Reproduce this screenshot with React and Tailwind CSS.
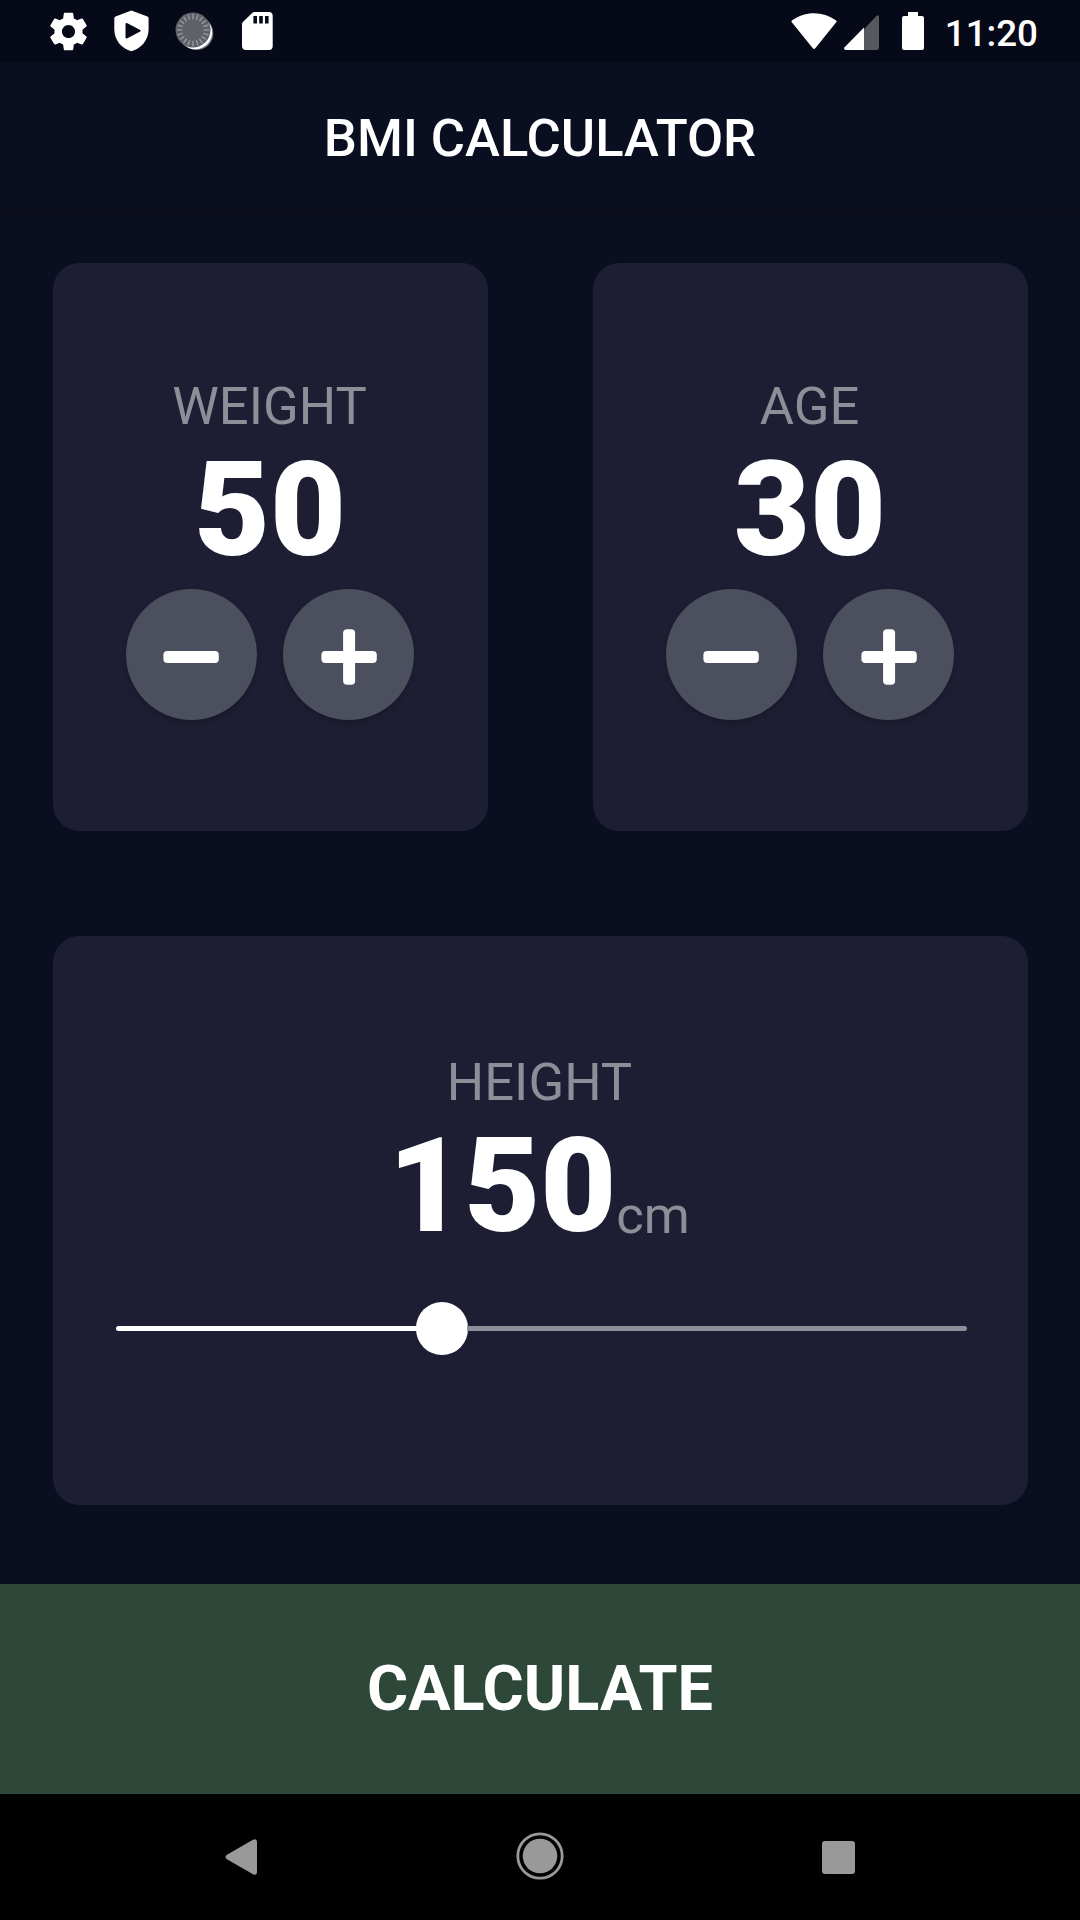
const GEAR =
  "M19.43 12.98c.04-.32.07-.64.07-.98s-.03-.66-.07-.98l2.11-1.65c.19-.15.24-.42.12-.64l-2-3.46c-.12-.22-.39-.3-.61-.22l-2.49 1c-.52-.4-1.08-.73-1.69-.98l-.38-2.65C14.46 2.18 14.25 2 14 2h-4c-.25 0-.46.18-.49.42l-.38 2.65c-.61.25-1.17.59-1.69.98l-2.49-1c-.23-.09-.49 0-.61.22l-2 3.46c-.13.22-.07.49.12.64l2.11 1.65c-.04.32-.07.65-.07.98s.03.66.07.98l-2.11 1.65c-.19.15-.24.42-.12.64l2 3.46c.12.22.39.3.61.22l2.49-1c.52.4 1.08.73 1.69.98l.38 2.65c.03.24.24.42.49.42h4c.25 0 .46-.18.49-.42l.38-2.65c.61-.25 1.17-.59 1.69-.98l2.49 1c.23.09.49 0 .61-.22l2-3.46c.12-.22.07-.49-.12-.64l-2.11-1.65zM12 15.5c-1.93 0-3.5-1.57-3.5-3.5s1.57-3.5 3.5-3.5 3.5 1.57 3.5 3.5-1.57 3.5-3.5 3.5z";

function SpinnerIcon() {
  const ticks = Array.from({ length: 20 }, (_, i) => i * 18);
  return (
    <svg className="h-[40px] w-[40px]" viewBox="0 0 40 40">
      <circle cx="21.5" cy="21.3" r="16.8" fill="#77797f" />
      <circle cx="20.3" cy="20.4" r="16.8" fill="#fff" />
      <circle cx="18" cy="18" r="17.5" fill="#5f6169" />
      {ticks.map((a) => (
        <path
          key={a}
          d="M18 1.8v5.4"
          stroke="#96989d"
          strokeWidth="1.4"
          transform={`rotate(${a} 18 18)`}
        />
      ))}
    </svg>
  );
}

function StatusBar() {
  return (
    <div className="flex h-[63px] shrink-0 items-center justify-between bg-[#060917] pr-[42px] pl-[46px]">
      <div className="flex items-center">
        <svg className="h-[45px] w-[45px]" viewBox="0 0 24 24" fill="#fff">
          <path d={GEAR} />
        </svg>
        <svg className="mb-[1px] ml-[23px] h-[42px] w-[35px]" viewBox="0 0 35 42" fill="#fff">
          <path
            fillRule="evenodd"
            d="M17.4 0.4L33.4 6.6Q34.6 7.2 34.6 8.5V19.5C34.6 30 27 38.8 17.4 41.2C7.8 38.8 0.3 30 0.3 19.5V8.5Q0.3 7.2 1.5 6.6ZM11.5 14.4V27.2Q11.6 29.2 13.4 28.3L26.2 21.6Q27.4 20.8 26.2 20L13.4 13.2Q11.6 12.4 11.5 14.4Z"
          />
        </svg>
        <div className="ml-[26px]">
          <SpinnerIcon />
        </div>
        <svg className="mb-[1px] ml-[27px] h-[38px] w-[31px]" viewBox="0 0 31 38" fill="#fff">
          <path
            fillRule="evenodd"
            d="M12.5 0H27Q30.7 0 30.7 4V34Q30.7 38 27 38H4Q0 38 0 34V12Q0 11 0.9 10.1L10.4 0.8Q11.3 0 12.5 0ZM11.4 4H15V11.5H11.4ZM17.2 4H20.8V11.5H17.2ZM23 4H26.6V11.5H23Z"
          />
        </svg>
      </div>
      <div className="flex items-center">
        <svg className="mb-[1px] h-[38px] w-[134px]" viewBox="791 12 134 38" fill="#fff">
          <path d="M792 22.6Q790.8 21.2 792.2 20.2C799 15.6 806 13.2 814 13.2C822 13.2 829.2 15.6 835.8 20.2Q837.3 21.2 836 22.6L815.3 48.3Q814 49.7 812.8 48.3Z" />
          <path
            d="M864 29.2L876.3 15.9Q879 14 879 17V47.8Q879 50 876.8 50H864Z"
            fill="#565860"
          />
          <path d="M864 27.5V50H845.6Q843.2 49.2 844.6 47.2Z" />
          <path d="M908 12H918V16H922Q924 16 924 18V48Q924 50 922 50H904Q902 50 902 48V18Q902 16 904 16H908Z" />
        </svg>
        <span className="ml-[20px] pt-[3px] text-[36.75px] leading-[43px] font-medium text-white">
          11:20
        </span>
      </div>
    </div>
  );
}

function RoundButton({ label, plus }) {
  return (
    <button
      aria-label={label}
      className="flex h-[131.25px] w-[131.25px] items-center justify-center rounded-full bg-[#4c4f5e] pt-[5px] shadow-[0_3px_5px_rgba(0,0,0,0.2)]"
    >
      <svg className="h-[56px] w-[56px]" viewBox="0 0 56 56" fill="#fff">
        <rect x="0.4" y="22" width="55.4" height="12" rx="4" />
        {plus && <rect x="22.1" y="0.3" width="12" height="55.4" rx="4" />}
      </svg>
    </button>
  );
}

function Card({ children }) {
  return (
    <section className="flex flex-1 flex-col items-center justify-center rounded-[26.25px] bg-[#1d1e33]">
      {children}
    </section>
  );
}

function Label({ children }) {
  return (
    <h2 className="mr-[1px] text-[52.5px] leading-[61.5px] font-normal text-[#8d8e98]">
      {children}
    </h2>
  );
}

function Counter({ label, value }) {
  return (
    <Card>
      <div className="pt-[2px]">
        <Label>{label}</Label>
      </div>
      <div className="-mt-[4px] mb-[2px] text-[131.25px] leading-[154px] font-black text-white">
        {value}
      </div>
      <div className="flex gap-[26.25px]">
        <RoundButton label={`Decrease ${label}`} />
        <RoundButton label={`Increase ${label}`} plus />
      </div>
    </Card>
  );
}

function HeightCard() {
  return (
    <Card>
      <div className="pt-[2px]">
        <Label>HEIGHT</Label>
      </div>
      <div className="-mt-[4.5px] mr-[2px] mb-[2.5px] flex h-[154px] items-end">
        <span className="text-[131.25px] leading-[154px] font-black text-white">150</span>
        <span className="mb-[16px] text-[52.5px] leading-[61.5px] text-[#8d8e98]">cm</span>
      </div>
      <div className="flex h-[126px] w-full items-center pr-[60.5px] pl-[63px]">
        <div className="h-[5px] w-[301px] rounded-l-full bg-white" />
        <div className="-mx-px h-[52.5px] w-[52.5px] shrink-0 rounded-full bg-white" />
        <div className="h-[5px] flex-1 rounded-r-full bg-[#8d8e98]" />
      </div>
    </Card>
  );
}

export default function App() {
  return (
    <div className="flex h-[1920px] w-[1080px] flex-col overflow-hidden bg-[#0a0e21] font-['Roboto',sans-serif]">
      <StatusBar />
      <header className="flex h-[147px] shrink-0 items-center justify-center pt-[5px]">
        <h1 className="text-[52.5px] leading-[61.5px] font-medium text-white">BMI CALCULATOR</h1>
      </header>
      <div className="h-[20px] shrink-0 bg-linear-to-b from-[#0a0c1a] to-[#0a0e21]" />
      <main className="flex flex-1 flex-col gap-[105px] px-[52.5px] pt-[32.5px] pb-[79px]">
        <div className="flex flex-1 gap-[105px]">
          <Counter label="WEIGHT" value="50" />
          <Counter label="AGE" value="30" />
        </div>
        <div className="flex flex-1">
          <HeightCard />
        </div>
      </main>
      <button className="h-[210px] shrink-0 bg-[#2d4739] text-[63px] leading-[74px] font-bold text-white">
        CALCULATE
      </button>
      <nav className="flex h-[126px] shrink-0 items-center justify-between bg-black px-[225px]">
        <svg className="h-[36px] w-[32px]" viewBox="0 0 32 36" fill="#999">
          <path d="M28 0.8Q32 -1 32 3V33Q32 37 28 35.2L1.5 20Q-0.5 18 1.5 16Z" />
        </svg>
        <svg className="mb-[2px] h-[48px] w-[48px]" viewBox="0 0 48 48">
          <circle cx="24" cy="24" r="22.2" fill="none" stroke="#999" strokeWidth="2.8" />
          <circle cx="24" cy="24" r="17.3" fill="#999" />
        </svg>
        <div className="h-[33px] w-[33px] rounded-[3px] bg-[#999]" />
      </nav>
    </div>
  );
}
